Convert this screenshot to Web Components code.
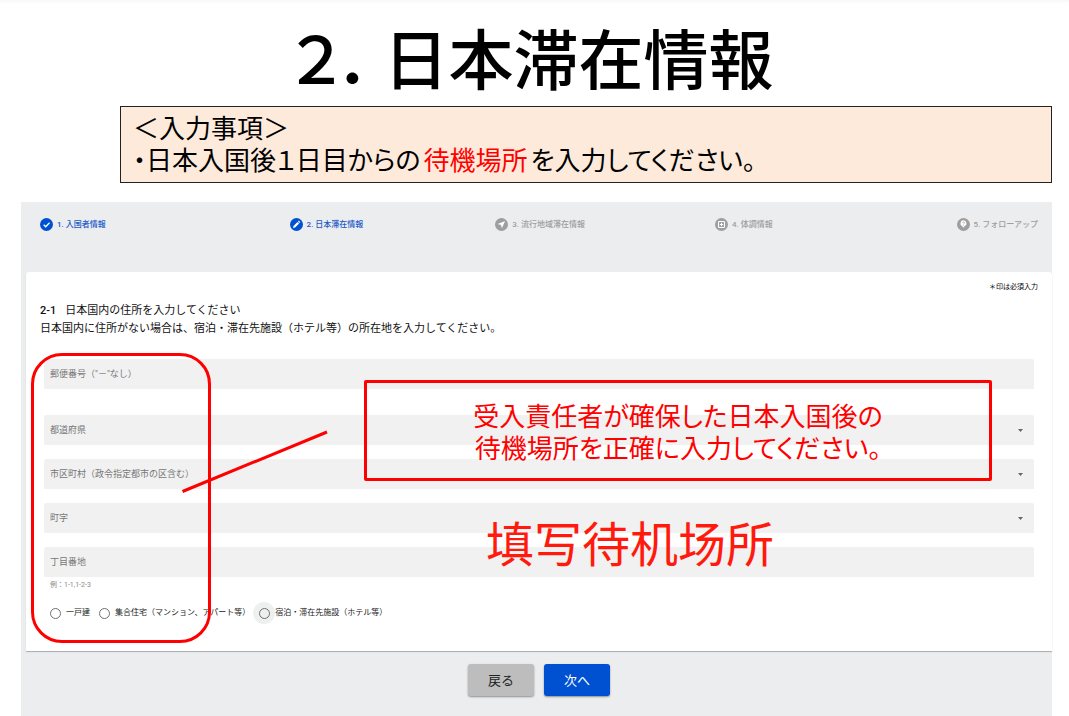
<!DOCTYPE html>
<html lang="ja">
<head>
<meta charset="utf-8">
<meta name="viewport" content="width=device-width, initial-scale=1">
<title>２．日本滞在情報</title>
<style>
  html, body { margin: 0; min-height: 100%; background: #fff; }
  body { font-family: "Noto Sans CJK JP", "Noto Sans", sans-serif; color: #000; }
</style>
</head>
<body>
<guide-slide>
  <slide-title slot="title"><span slot="number">２．</span>日本滞在情報</slide-title>
  <notice-box slot="notice">
    <span slot="head">＜入力事項＞</span>
    <span>・日本入国後１日目からの<notice-mark>待機場所</notice-mark>を入力してください。</span>
  </notice-box>
  <entry-app>
    <step-bar slot="steps">
      <step-item icon="check" active>1. 入国者情報</step-item>
      <step-item icon="pen" active>2. 日本滞在情報</step-item>
      <step-item icon="plane">3. 流行地域滞在情報</step-item>
      <step-item icon="medical">4. 体調情報</step-item>
      <step-item icon="help">5. フォローアップ</step-item>
    </step-bar>
    <address-card>
      <text-field label="郵便番号（&quot;－&quot;なし）" spaced></text-field>
      <select-field label="都道府県"></select-field>
      <select-field label="市区町村（政令指定都市の区含む）"></select-field>
      <select-field label="町字"></select-field>
      <text-field label="丁目番地" hint="例：1-1,1-2-3"></text-field>
      <housing-options></housing-options>
      <area-outline slot="marks"></area-outline>
      <pointer-line slot="marks"></pointer-line>
      <callout-note slot="marks">受入責任者が確保した日本入国後の<br>待機場所を正確に入力してください。</callout-note>
      <hand-note slot="marks" lang="zh-CN">填写待机场所</hand-note>
    </address-card>
    <nav-button slot="actions">戻る</nav-button>
    <nav-button slot="actions" primary>次へ</nav-button>
  </entry-app>
</guide-slide>

<script>
  function define(name, html, setup) {
    const template = document.createElement('template');
    template.innerHTML = html.trim();
    customElements.define(name, class extends HTMLElement {
      constructor() {
        super();
        this.attachShadow({ mode: 'open' }).append(template.content.cloneNode(true));
      }
      connectedCallback() {
        if (setup) setup(this, this.shadowRoot);
      }
    });
  }

  define('guide-slide', `
    <style>
      :host { display: flex; flex-direction: column; min-height: 100vh; box-sizing: border-box;
              padding: 0 17px 0 21px; background: linear-gradient(#f8f8f8, #fff 4px); }
      main { display: flex; flex-direction: column; flex: 1; }
    </style>
    <main><slot name="title"></slot><slot name="notice"></slot><slot></slot></main>`);

  define('slide-title', `
    <style>
      :host { display: block; padding: 14px 8px 8px 0; }
      h1 { margin: 0; font-size: 65px; line-height: 84px; font-weight: 500; text-align: center;
           font-feature-settings: "palt"; }
      ::slotted(span) { margin-right: 10px; }
    </style>
    <h1><slot name="number"></slot><slot></slot></h1>`);

  define('notice-box', `
    <style>
      :host { display: block; margin: 0 0 19px 99px; padding: 6px 12px 5px; border: 1px solid #222;
              background: #fdeadb; font: 26px/32px "Liberation Sans", "Noto Sans CJK JP", sans-serif;
              font-feature-settings: "palt"; }
      p { margin: 0; }
    </style>
    <p><slot name="head"></slot></p>
    <p><slot></slot></p>`);

  define('notice-mark', `
    <style>:host { display: inline; padding: 0 3px; color: #f00; }</style><slot></slot>`);

  define('entry-app', `
    <style>
      :host { display: flex; flex-direction: column; flex: 1; background: #ecedef; }
      footer { display: flex; justify-content: center; gap: 10px; padding: 13px 0 20px 5px; }
    </style>
    <slot name="steps"></slot>
    <slot></slot>
    <footer><slot name="actions"></slot></footer>`);

  define('step-bar', `
    <style>
      :host { display: block; padding: 16px 14px 41px 19px; }
      nav { display: grid; grid-template-columns: 250fr 206fr 220fr 242fr 80fr; }
    </style>
    <nav aria-label="入力ステップ"><slot></slot></nav>`);

  const stepIcons = {
    check: '<path d="M3.7 6.7l2 2 3.8-4" fill="none" stroke="#fff" stroke-width="1.3"/>',
    pen: '<path d="M3 10l.5-2.1 4-4 1.600 1.600-4 4zM8 3.400l.8-.8 1.600 1.600-.8.8z" fill="#fff"/>',
    plane: '<path d="M10.100 2.900L2.700 6l3.200 1 1 3.200z" fill="#fff"/>',
    medical: '<rect x="3.5" y="3.5" width="6" height="6" rx=".8" fill="none" stroke="#fff" stroke-width="1.1"/><path d="M6.5 4.9v3.2M4.9 6.5h3.2" stroke="#fff"/>',
    help: '<path d="M6.5 2.3a3.1 3.1 0 0 1 .6 6.1v1.7L5.2 8.2A3.1 3.1 0 0 1 6.5 2.3z" fill="#fff"/><path d="M5.5 4.7c.2-1.2 2.2-1 2 .2-.1.6-1 .7-1 1.5M6.5 6.9v.7" fill="none" stroke="#a0a0a0" stroke-width=".7"/>'
  };

  define('step-item', `
    <style>
      :host { display: block; white-space: nowrap; color: #9e9e9e; --disc: #9e9e9e; }
      :host([active]) { color: #2059c8; --disc: #0050d2; }
      a { display: flex; align-items: center; gap: 4px; color: inherit; text-decoration: none;
          font: 500 8px/13px Roboto, "Noto Sans CJK JP", sans-serif; }
      svg { width: 13px; height: 13px; flex: none; }
      circle { fill: var(--disc); }
    </style>
    <a href="#"><svg viewBox="0 0 13 13" aria-hidden="true"><circle cx="6.5" cy="6.5" r="6.5"/><g></g></svg><span><slot></slot></span></a>`,
    (host, root) => { root.querySelector('g').innerHTML = stepIcons[host.getAttribute('icon')] || ''; });

  define('address-card', `
    <style>
      :host { display: block; position: relative; margin-left: 5px; background: #fff;
              border-radius: 3px 3px 0 0; box-shadow: 0 1px 1px #a9abae; padding: 8px 14px 27px 14px; }
      .required { margin: 0 0 10px; text-align: right; font-size: 7px; line-height: 12px; }
      h2 { margin: 0 0 21px; font: 400 11px/18px Roboto, "Noto Sans CJK JP", sans-serif; color: #111; }
      b { font-weight: 500; margin-right: 9px; }
      form { display: flex; flex-direction: column; padding: 0 4px 0 4px; }
    </style>
    <p class="required">＊印は必須入力</p>
    <h2><b>2-1</b>日本国内の住所を入力してください<br>日本国内に住所がない場合は、宿泊・滞在先施設（ホテル等）の所在地を入力してください。</h2>
    <form><slot></slot></form>
    <slot name="marks"></slot>`);

  const fieldStyle = `
      :host { display: block; margin-bottom: 14px; font: 9px/30px Roboto, "Noto Sans CJK JP", sans-serif; color: #777; }
      .box { display: grid; align-items: center; height: 30px; background: #f1f1f1; border-radius: 2px 2px 0 0; }
      label, .box > input, select, .arrow { grid-area: 1 / 1; }
      label { padding-left: 6px; pointer-events: none; }
      .box > input, select { width: 100%; height: 30px; box-sizing: border-box; margin: 0; padding: 0 6px;
              border: 0; background: none; font: inherit; color: #222; appearance: none; }
  `;

  define('text-field', `
    <style>${fieldStyle}
      :host([spaced]) { margin-bottom: 26px; }
      :host([hint]) { margin-bottom: 11px; }
      small { display: block; padding: 2px 0 0 6px; font-size: 7px; line-height: 12px; color: #888; }
      small:empty { display: none; }
    </style>
    <div class="box"><input id="f" type="text" aria-describedby="h"><label for="f"></label></div>
    <small id="h"></small>`,
    (host, root) => {
      root.querySelector('label').textContent = host.getAttribute('label');
      root.querySelector('small').textContent = host.getAttribute('hint') || '';
    });

  define('select-field', `
    <style>${fieldStyle}
      .arrow { justify-self: end; margin-right: 11px; width: 5px; height: 3px; pointer-events: none; }
    </style>
    <div class="box"><select id="f"><option></option></select><label for="f"></label>
      <svg class="arrow" viewBox="0 0 5 3" aria-hidden="true"><path d="M0 0h5L2.5 3z" fill="#666"/></svg></div>`,
    (host, root) => { root.querySelector('label').textContent = host.getAttribute('label'); });

  define('housing-options', `
    <style>
      :host { display: block; font: 8px/22px Roboto, "Noto Sans CJK JP", sans-serif; color: #222; }
      fieldset { display: flex; margin: 0; padding: 0; border: 0; gap: 3px; }
      label { display: flex; align-items: center; white-space: nowrap; }
      .ring { display: grid; place-items: center; width: 22px; height: 22px; border-radius: 50%; }
      .ring.hover { background: #eeefef; }
      input { appearance: none; width: 11px; height: 11px; margin: 0; border: 1px solid #707070; border-radius: 50%; }
      input:checked { background: radial-gradient(#0050d2 40%, transparent 45%); }
    </style>
    <fieldset aria-label="住居の種類">
      <label><span class="ring"><input type="radio" name="home"></span>一戸建</label>
      <label><span class="ring"><input type="radio" name="home"></span>集合住宅（マンション、アパート等）</label>
      <label><span class="ring hover"><input type="radio" name="home"></span>宿泊・滞在先施設（ホテル等）</label>
    </fieldset>`);

  define('nav-button', `
    <style>
      :host { display: block; }
      button { width: 66px; height: 32px; padding: 0; border: 0; border-radius: 3px; background: #bdbdbd; color: #222;
               font: 13px/32px "Noto Sans CJK JP", sans-serif; box-shadow: 0 1px 2px #0006; }
      :host([primary]) button { background: #0050d2; color: #fff; }
    </style>
    <button type="button"><slot></slot></button>`);

  define('area-outline', `
    <style>
      :host { position: absolute; left: 5px; top: 81px; width: 180px; height: 290px; box-sizing: border-box;
              border: 3px solid #f00; border-radius: 31px; pointer-events: none; }
    </style>`);

  define('pointer-line', `
    <style>
      :host { position: absolute; left: 155px; top: 158px; width: 148px; height: 64px; pointer-events: none; }
      svg { display: block; width: 100%; height: 100%; }
    </style>
    <svg viewBox="0 0 148 64" aria-hidden="true"><path d="M1.500 61.500L146 2" stroke="#f00" stroke-width="3"/></svg>`);

  define('callout-note', `
    <style>
      :host { position: absolute; left: 338px; right: 60px; top: 108px; box-sizing: border-box; padding: 18px 0 13px;
              border: 3px solid #f00; border-radius: 2px; color: #f00; text-align: center;
              font: 26px/32px "Liberation Sans", "Noto Sans CJK JP", sans-serif;
              font-feature-settings: "palt"; pointer-events: none; }
    </style>
    <slot></slot>`);

  define('hand-note', `
    <style>
      :host { position: absolute; left: 460px; top: 239px; color: #ff1a0d; white-space: nowrap; pointer-events: none;
              font: 400 48px/60px "Noto Sans CJK SC", sans-serif; }
    </style>
    <slot></slot>`);
</script>
</body>
</html>
